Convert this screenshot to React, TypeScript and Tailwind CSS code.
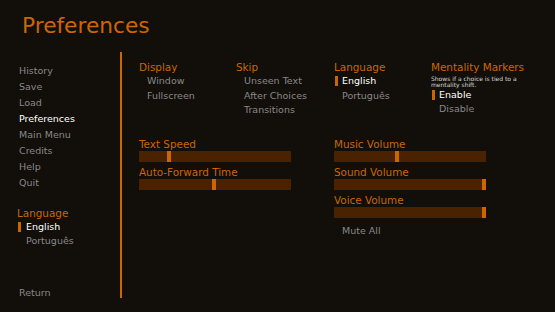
import React from 'react';

const ORANGE = 'text-[#cc6600]';

const navItems = ['History', 'Save', 'Load', 'Preferences', 'Main Menu', 'Credits', 'Help', 'Quit'];

// one option line, with the orange marker when it is the chosen one
function Option({ label, selected = false }: { label: string; selected?: boolean }) {
  if (selected) {
    return (
      <div className="flex items-center leading-[14.5px] text-white">
        <span className="ml-[1px] h-[10px] w-[3px] bg-[#cc6600]" />
        <span className="ml-[4px]">{label}</span>
      </div>
    );
  }
  return <div className="pl-[8px] leading-[14.5px] text-[#888888]">{label}</div>;
}

function Slider({ label, value }: { label: string; value: number }) {
  const max = 148;
  return (
    <div className="flex flex-col">
      <div className={`pt-[1px] text-[10.4px] leading-[13px] ${ORANGE}`}>{label}</div>
      <div className="relative h-[11px] w-[152px] bg-[#4a2200]">
        <div className="absolute top-0 h-full w-[4px] bg-[#cc6600]" style={{ left: Math.round(value * max) }} />
      </div>
    </div>
  );
}

export default function App() {
  return (
    <div className="flex h-[312px] w-[555px] flex-col overflow-hidden bg-[#120e0a] font-['DejaVu_Sans',sans-serif]">
      <h1 className={`pl-[22px] pt-[13px] text-[21.7px] leading-[26px] ${ORANGE}`}>Preferences</h1>

      <div className="mt-[13px] flex h-[246px]">
        {/* navigation */}
        <nav className="flex w-[120px] flex-col pl-[19px] pt-[11px] text-[9.5px]">
          {navItems.map((item) => (
            <div key={item} className={`leading-[16px] ${item === 'Preferences' ? 'text-white' : 'text-[#888888]'}`}>
              {item}
            </div>
          ))}

          <div className={`ml-[-2px] mt-[15px] text-[10.4px] leading-[14px] ${ORANGE}`}>Language</div>
          <div className="flex items-center leading-[14px] text-white">
            <span className="ml-[-1px] h-[10px] w-[3px] bg-[#cc6600]" />
            <span className="ml-[5px]">English</span>
          </div>
          <div className="pl-[7px] leading-[14px] text-[#888888]">Português</div>

          <div className="mb-[-1px] mt-auto leading-[12px] text-[#888888]">Return</div>
        </nav>

        <div className="w-[2px] bg-[#cc6600]" />

        <div className="flex-1 pl-[17px] pt-[9px] text-[9.5px]">
          <div className="grid grid-cols-[97px_98px_97px_1fr]">
            <div>
              <div className={`text-[10.4px] leading-[13px] ${ORANGE}`}>Display</div>
              <Option label="Window" />
              <Option label="Fullscreen" />
            </div>
            <div>
              <div className={`text-[10.4px] leading-[13px] ${ORANGE}`}>Skip</div>
              <Option label="Unseen Text" />
              <Option label="After Choices" />
              <Option label="Transitions" />
            </div>
            <div>
              <div className={`text-[10.4px] leading-[13px] ${ORANGE}`}>Language</div>
              <Option label="English" selected />
              <Option label="Português" />
            </div>
            <div>
              <div className={`text-[10.4px] leading-[13px] ${ORANGE}`}>Mentality Markers</div>
              <div className="mt-[1.5px] text-[6px] leading-[6.5px] text-[#d8d8d8]">
                Shows if a choice is tied to a<br />mentality shift.
              </div>
              <div className="mt-[-0.75px]">
                <Option label="Enable" selected />
                <Option label="Disable" />
              </div>
            </div>
          </div>

          <div className="mt-[19.5px] grid grid-cols-[195px_1fr]">
            <div className="flex flex-col gap-[3px]">
              <Slider label="Text Speed" value={0.19} />
              <Slider label="Auto-Forward Time" value={0.49} />
            </div>
            <div className="flex flex-col gap-[3px]">
              <Slider label="Music Volume" value={0.41} />
              <Slider label="Sound Volume" value={1} />
              <Slider label="Voice Volume" value={1} />
              <div className="mt-[2.5px] pl-[8px] leading-[14px] text-[#888888]">Mute All</div>
            </div>
          </div>
        </div>
      </div>
    </div>
  );
}
